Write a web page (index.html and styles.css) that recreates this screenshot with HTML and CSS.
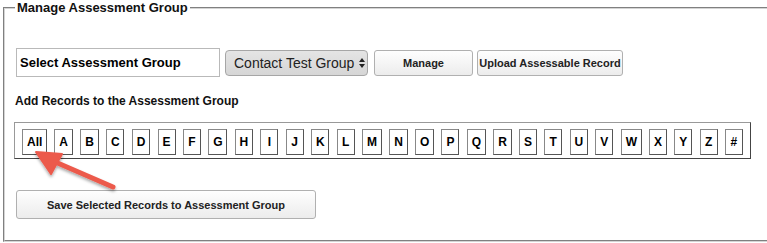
FILE: index.html
```html
<!DOCTYPE html>
<html lang="en">
<head>
  <meta charset="UTF-8">
  <title>Manage Assessment Group</title>
  <link rel="stylesheet" href="styles.css">
</head>
<body>
  <fieldset class="group-box">
    <legend>Manage Assessment Group</legend>

    <div class="group-row">
      <input class="group-name" type="text" value="Select Assessment Group" readonly>
      <div class="group-select">Contact Test Group <span class="updown"></span></div>
      <button class="btn btn-manage">Manage</button>
      <button class="btn btn-upload">Upload Assessable Record</button>
    </div>

    <h4 class="sub-title">Add Records to the Assessment Group</h4>

    <div class="letters">
      <button class="letter">All</button>
      <button class="letter">A</button>
      <button class="letter">B</button>
      <button class="letter">C</button>
      <button class="letter">D</button>
      <button class="letter">E</button>
      <button class="letter">F</button>
      <button class="letter">G</button>
      <button class="letter">H</button>
      <button class="letter">I</button>
      <button class="letter">J</button>
      <button class="letter">K</button>
      <button class="letter">L</button>
      <button class="letter">M</button>
      <button class="letter">N</button>
      <button class="letter">O</button>
      <button class="letter">P</button>
      <button class="letter">Q</button>
      <button class="letter">R</button>
      <button class="letter">S</button>
      <button class="letter">T</button>
      <button class="letter">U</button>
      <button class="letter">V</button>
      <button class="letter">W</button>
      <button class="letter">X</button>
      <button class="letter">Y</button>
      <button class="letter">Z</button>
      <button class="letter">#</button>
    </div>

    <button class="btn btn-save">Save Selected Records to Assessment Group</button>
  </fieldset>

  <!-- annotation arrow pointing at "All" -->
  <svg class="callout" width="100" height="50" viewBox="0 0 100 50">
    <defs>
      <filter id="shadow" x="-20%" y="-20%" width="140%" height="160%">
        <feDropShadow dx="0" dy="2" stdDeviation="1.5" flood-color="#000" flood-opacity="0.35"/>
      </filter>
    </defs>
    <g filter="url(#shadow)" fill="#ec5a4c" stroke="#ec5a4c" stroke-linejoin="round">
      <line x1="82" y1="38" x2="22" y2="12" stroke-width="5" stroke-linecap="round"/>
      <polygon points="5,3 31,5 20,25" stroke-width="2"/>
    </g>
  </svg>
</body>
</html>
```

FILE: styles.css
```css
body {
  margin: 0;
  width: 767px;
  height: 243px;
  overflow: hidden;
  position: relative;
  font-family: 'Liberation Sans', Arial, sans-serif;
  color: #000;
  background: #fff;
}

.group-box {
  margin: 0 0 0 3px;
  width: 820px;
  height: 242px;
  box-sizing: border-box;
  padding: 0 10px;
  border: 2px groove #d4d4d4;
}

.group-box legend {
  padding: 0 2px;
  font-size: 13px;
  font-weight: bold;
  color: #111;
}

.group-row {
  display: flex;
  align-items: center;
  margin-top: 33px;
  margin-left: 1px;
}

.group-name {
  width: 204px;
  height: 29px;
  box-sizing: border-box;
  padding: 0 3px;
  border: 1px solid #b9b9b9;
  font-family: 'Liberation Sans', Arial, sans-serif;
  font-size: 13px;
  font-weight: bold;
  color: #000;
  outline: none;
}

.group-select {
  margin-left: 5px;
  width: 143px;
  height: 26px;
  box-sizing: border-box;
  display: flex;
  align-items: center;
  padding-left: 8px;
  border: 1px solid #a6a6a6;
  border-radius: 4px;
  background: linear-gradient(#e4e4e4, #d6d6d6);
  font-size: 14px;
  color: #222;
}

.updown {
  position: relative;
  width: 6px;
  height: 10px;
  margin-left: 5px;
}

.updown::before,
.updown::after {
  content: "";
  position: absolute;
  left: 0;
  border-left: 3px solid transparent;
  border-right: 3px solid transparent;
}

.updown::before {
  top: 0;
  border-bottom: 4px solid #222;
}

.updown::after {
  bottom: 0;
  border-top: 4px solid #222;
}

.btn {
  height: 26px;
  box-sizing: border-box;
  border: 1px solid #b0b0b0;
  border-radius: 3px;
  background: linear-gradient(#fefefe, #ececec);
  font-family: 'Liberation Sans', Arial, sans-serif;
  font-size: 11px;
  font-weight: bold;
  color: #222;
  padding: 0;
  white-space: nowrap;
}

.btn-manage {
  margin-left: 6px;
  width: 99px;
}

.btn-upload {
  margin-left: 4px;
  width: 146px;
}

.sub-title {
  margin: 17px 0 0 0;
  font-size: 12px;
  font-weight: bold;
  color: #111;
}

.letters {
  display: flex;
  gap: 7.3px;
  width: 737px;
  height: 37px;
  box-sizing: border-box;
  margin: 14px 0 0 -1px;
  padding: 6px 7px;
  border: 1px solid #444;
  border-left-color: #999;
  border-top-color: #999;
}

.letter {
  height: 26px;
  box-sizing: border-box;
  padding: 0 4px;
  min-width: 18px;
  border: 1px solid #555;
  border-top-color: #888;
  border-left-color: #888;
  background: #fff;
  font-family: 'Liberation Sans', Arial, sans-serif;
  font-size: 12px;
  font-weight: bold;
  color: #000;
}

.btn-save {
  display: block;
  margin: 31px 0 0 1px;
  width: 300px;
  height: 29px;
  font-size: 11px;
}

.callout {
  position: absolute;
  left: 31px;
  top: 149px;
}
```
